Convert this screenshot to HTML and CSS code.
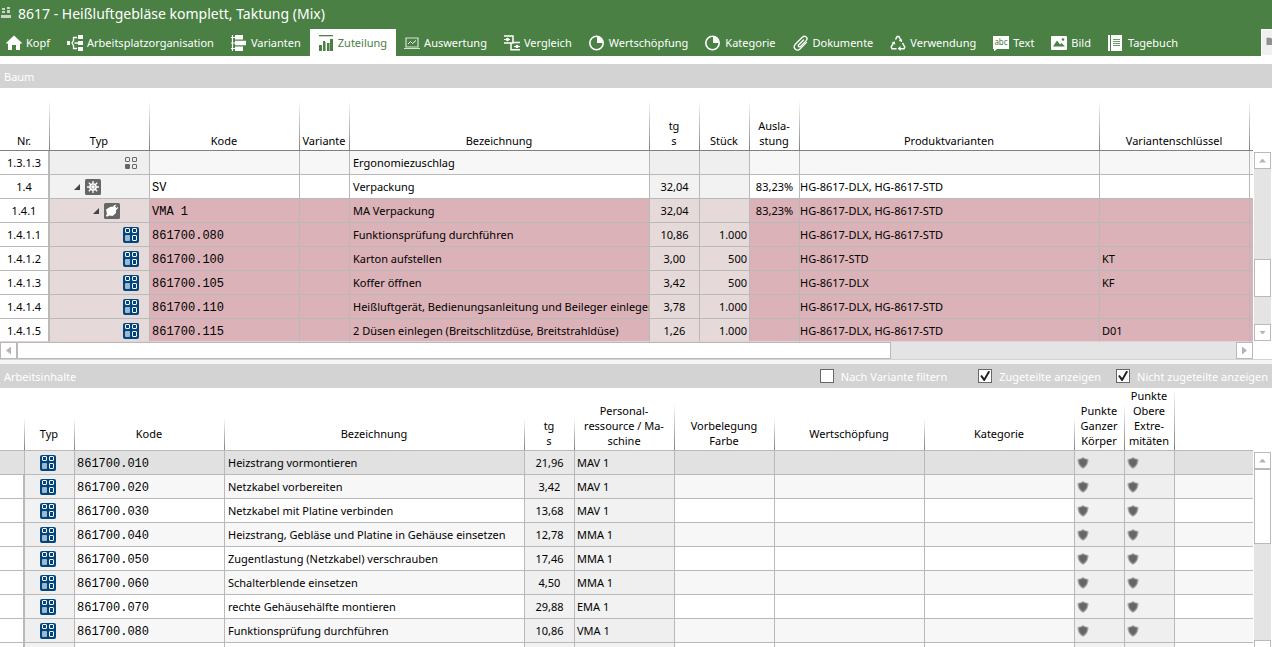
FILE: index.html
```html
<!DOCTYPE html>
<html lang="de">
<head>
<meta charset="utf-8">
<title>8617 - Heißluftgebläse komplett, Taktung (Mix)</title>
<link rel="stylesheet" href="styles.css">
</head>
<body>
<svg class="defs" aria-hidden="true">
  <symbol id="step" viewBox="0 0 16 16">
    <rect width="16" height="16" rx="2" fill="#00457c"/>
    <g fill="none" stroke="#fff"><rect x="2.5" y="1.5" width="4" height="4" rx=".5"/><rect x="9.5" y="1.5" width="4" height="4" rx=".5"/><rect x="9.5" y="8.5" width="4" height="5" rx=".5"/></g>
    <rect x="2" y="8" width="5" height="6" rx="1" fill="#9db9d0"/>
  </symbol>
  <symbol id="step-plain" viewBox="0 0 16 16">
    <g fill="none" stroke="#666"><rect x="2.5" y="2.5" width="4" height="4" rx=".5"/><rect x="9.5" y="2.5" width="4" height="4" rx=".5"/><rect x="9.5" y="9.5" width="4" height="4" rx=".5"/></g>
    <rect x="2" y="9" width="5" height="5" rx="1" fill="#666"/>
  </symbol>
  <symbol id="gear" viewBox="0 0 16 16">
    <rect width="16" height="16" rx="1.5" fill="#666"/>
    <path d="M8 2v12M2 8h12M3.8 3.8l8.4 8.4M12.2 3.8l-8.4 8.4" stroke="#fff" stroke-width="1.3"/>
    <circle cx="8" cy="8" r="3.8" fill="#fff"/><circle cx="8" cy="8" r="2" fill="none" stroke="#999" stroke-width=".8"/>
  </symbol>
  <symbol id="tool" viewBox="0 0 16 16">
    <rect width="16" height="16" rx="1.5" fill="#666"/>
    <path d="M2 6.500l4-2.500 2.500-.5L12 7v3l-3.500 3-3-.5-2.500 1.300-1-1 1-2z" fill="#fff"/>
    <path d="M9 4.500c0-2 2-3 3.500-2.500L11 3.500l1.500 1.500L14 3.800c.3 2-1.200 3.500-3 3.200z" fill="#fff"/>
  </symbol>
  <symbol id="shield" viewBox="0 0 12 12">
    <path d="M6 0l2.500 1.500 3 .5c.2 4-1.500 8-5.500 9.800C2 10 .3 6 .5 2l3-.5z" fill="#b0b0b0"/>
    <path d="M6 1.800l4 1.200c0 3-1.300 5.800-4 7.300C3.300 8.800 2 6 2 3z" fill="#666" stroke="#777"/>
  </symbol>
</svg>

<header class="app">
  <div class="title">
    <svg width="12" height="12" viewBox="0 0 12 12" fill="#c6d8c4"><path d="M2 1h3v2H2zM7 0h3v2H7zM2 4h3v2H2zM7 3h3v3H7zM1 8h10v3H1z"/></svg>
    <h1>8617 - Heißluftgebläse komplett, Taktung (Mix)</h1>
  </div>
  <nav class="tabs">
    <button class="tab"><svg viewBox="0 0 16 16"><path d="M8 .5l8 7.500-1 1-1-.8V15h-4v-5H6v5H2V8.200L1 9 0 8z" fill="#fff"/></svg>Kopf</button>
    <button class="tab"><svg viewBox="0 0 16 16"><path d="M0 6h3v4H0zM11 0h5v4h-5zM11 6h5v4h-5zM11 12h5v4h-5z" fill="#fff"/><path d="M10 2.500H6.500v3L5 8l1.500 2.500v3H10M7.500 8H11" fill="none" stroke="#fff" stroke-width="1.300"/></svg>Arbeitsplatzorganisation</button>
    <button class="tab"><svg viewBox="0 0 16 16"><path d="M1.500 0v16M0 2.500h4M0 8h4M0 13.500h4" stroke="#fff" stroke-width="1.200"/><path d="M4 0h8v4.500H4zM4 5.800h11v4.400H4zM4 11.500h8V16H4z" fill="#fff"/></svg>Varianten</button>
    <button class="tab active" aria-current="page"><svg viewBox="0 0 16 16"><path d="M1 0h14v1.300H1z" fill="#4a8044"/><path d="M1 10h3v6H1zM5 6h2v10H5zM9 8h2v8H9zM12 4h3v12h-3z" fill="#4a8044"/><path d="M7 7h1v9H7zM11 8h1v8h-1z" fill="#9dbb9a"/></svg>Zuteilung</button>
    <button class="tab"><svg viewBox="0 0 16 16"><path d="M2 3h12v9H2zM0 13.500h16" fill="none" stroke="#d5e2d3" stroke-width="1.200"/><path d="M4 9l2.500-2.500 2 2L12 5.500" fill="none" stroke="#fff"/></svg>Auswertung</button>
    <button class="tab"><svg viewBox="0 0 16 16"><path d="M0 1h9v7H0M7 8v6.800h9M8 7.500h8" fill="none" stroke="#fff" stroke-width="1.500"/><path d="M0 4.500h6M10 11.500h6" stroke="#fff"/><circle cx="3.500" cy="4.500" r="1.700" fill="#fff"/><circle cx="13" cy="11.500" r="1.700" fill="#fff"/></svg>Vergleich</button>
    <button class="tab"><svg viewBox="0 0 16 16"><circle cx="7.500" cy="8" r="6.700" fill="none" stroke="#fff" stroke-width="1.600"/><path d="M8 8V1.500A6.500 6.500 0 0 1 14 8z" fill="#fff"/></svg>Wertschöpfung</button>
    <button class="tab"><svg viewBox="0 0 16 16"><circle cx="7.500" cy="8" r="6.700" fill="none" stroke="#fff" stroke-width="1.600"/><path d="M8 8V1.500A6.500 6.500 0 0 1 14 8z" fill="#fff"/></svg>Kategorie</button>
    <button class="tab"><svg viewBox="0 0 16 16"><path d="M10.500 5L5.800 9.700c-1.300 1.300.4 3 1.700 1.700L13 5.900c2.700-2.900-.9-6.300-3.700-3.600L2.500 9c-3.500 3.600 1.100 8.200 4.700 4.700l6.300-6.300" fill="none" stroke="#fff" stroke-width="1.300" stroke-linecap="round"/></svg>Dokumente</button>
    <button class="tab"><svg viewBox="0 0 16 16"><path d="M5.500 4.500L7.200 1.500h1.600L11 5.500M12.500 8l2.300 4-.8 1.700h-4M6.500 13.700H2L1.200 12l2.500-4.500" fill="none" stroke="#fff" stroke-width="1.500"/><path d="M12.300 7.200l-3.500-1.500 3-1.800zM10.500 11v5l-2.800-2.400zM1.500 7.800l3.300-1.600.5 3.500z" fill="#fff"/></svg>Verwendung</button>
    <button class="tab"><svg viewBox="0 0 16 16"><path d="M0 1h16v13H4l-3 2.500V14H0z" fill="#fff"/><text x="8" y="10" class="abc">abc</text></svg>Text</button>
    <button class="tab"><svg viewBox="0 0 16 16"><rect y="1" width="16" height="14" rx="1" fill="#fff"/><path d="M2 11.500l4-6 3 4 1.500-1.500 3.500 3.500z" fill="#4a8044"/><circle cx="12" cy="4.500" r="1.300" fill="#4a8044"/></svg>Bild</button>
    <button class="tab"><svg viewBox="0 0 16 16"><path d="M0 0h14v16H0z" fill="#fff"/><path d="M2.500 0v16" stroke="#4a8044"/><path d="M5 4.500h7M5 6.500h7M5 8.500h7M5 10.500h7" stroke="#6f9a6a"/></svg>Tagebuch</button>
    <button class="more" aria-label="Weitere"><svg viewBox="0 0 16 16"><path d="M0 2h5l1 1h10v8H0z" fill="#909090"/></svg></button>
  </nav>
</header>

<main>
  <section class="panel tree">
    <div class="bar"><h2>Baum</h2></div>
    <div class="pane">
      <div class="grid">
        <table>
          <colgroup><col class="w50"><col class="w100"><col class="w150"><col class="w50"><col class="w300"><col class="w50"><col class="w50"><col class="w50"><col class="w300"><col class="w150"><col></colgroup>
          <thead><tr><th><span>Nr.</span></th><th><span>Typ</span></th><th><span>Kode</span></th><th><span>Variante</span></th><th><span>Bezeichnung</span></th><th><span>tg<br>s</span></th><th><span>Stück</span></th><th><span>Ausla-<br>stung</span></th><th><span>Produktvarianten</span></th><th><span>Variantenschlüssel</span></th><th></th></tr></thead>
          <tbody>
            <tr class="alt"><td class="nr">1.3.1.3</td><td class="ro l3"><svg class="i"><use href="#step-plain"/></svg></td><td></td><td></td><td class="name">Ergonomiezuschlag</td><td class="ro"></td><td class="ro"></td><td></td><td></td><td></td><td></td></tr>
            <tr><td class="nr">1.4</td><td class="ro l1"><i class="open"></i><svg class="i"><use href="#gear"/></svg></td><td class="code">SV</td><td></td><td class="name">Verpackung</td><td class="ro mid">32,04</td><td class="ro"></td><td class="mid">83,23%</td><td class="pv">HG-8617-DLX, HG-8617-STD</td><td></td><td></td></tr>
            <tr class="hit"><td class="nr">1.4.1</td><td class="ro l2"><i class="open"></i><svg class="i"><use href="#tool"/></svg></td><td class="code">VMA 1</td><td></td><td class="name">MA Verpackung</td><td class="ro mid">32,04</td><td class="ro"></td><td class="mid">83,23%</td><td class="pv">HG-8617-DLX, HG-8617-STD</td><td></td><td></td></tr>
            <tr class="hit"><td class="nr">1.4.1.1</td><td class="ro l3"><svg class="i"><use href="#step"/></svg></td><td class="code">861700.080</td><td></td><td class="name">Funktionsprüfung durchführen</td><td class="ro mid">10,86</td><td class="ro num">1.000</td><td></td><td class="pv">HG-8617-DLX, HG-8617-STD</td><td></td><td></td></tr>
            <tr class="hit"><td class="nr">1.4.1.2</td><td class="ro l3"><svg class="i"><use href="#step"/></svg></td><td class="code">861700.100</td><td></td><td class="name">Karton aufstellen</td><td class="ro mid">3,00</td><td class="ro num">500</td><td></td><td class="pv">HG-8617-STD</td><td>KT</td><td></td></tr>
            <tr class="hit"><td class="nr">1.4.1.3</td><td class="ro l3"><svg class="i"><use href="#step"/></svg></td><td class="code">861700.105</td><td></td><td class="name">Koffer öffnen</td><td class="ro mid">3,42</td><td class="ro num">500</td><td></td><td class="pv">HG-8617-DLX</td><td>KF</td><td></td></tr>
            <tr class="hit"><td class="nr">1.4.1.4</td><td class="ro l3"><svg class="i"><use href="#step"/></svg></td><td class="code">861700.110</td><td></td><td class="name">Heißluftgerät, Bedienungsanleitung und Beileger einlegen</td><td class="ro mid">3,78</td><td class="ro num">1.000</td><td></td><td class="pv">HG-8617-DLX, HG-8617-STD</td><td></td><td></td></tr>
            <tr class="hit last"><td class="nr">1.4.1.5</td><td class="ro l3"><svg class="i"><use href="#step"/></svg></td><td class="code">861700.115</td><td></td><td class="name">2 Düsen einlegen (Breitschlitzdüse, Breitstrahldüse)</td><td class="ro mid">1,26</td><td class="ro num">1.000</td><td></td><td class="pv">HG-8617-DLX, HG-8617-STD</td><td>D01</td><td></td></tr>
          </tbody>
        </table>
      </div>
      <div class="vscroll"><button class="arrow" aria-label="Nach oben"><i class="up"></i></button><div class="gap-before"></div><div class="thumb"></div><div class="gap-after"></div><button class="arrow" aria-label="Nach unten"><i class="down"></i></button></div>
      <div class="hscroll"><button class="arrow" aria-label="Nach links"><i class="left"></i></button><div class="thumb"></div><div class="rest"></div><button class="arrow" aria-label="Nach rechts"><i class="right"></i></button></div>
    </div>
  </section>

  <section class="panel work">
    <div class="bar"><h2>Arbeitsinhalte</h2>
      <div class="filters">
        <label class="first"><input type="checkbox">Nach Variante filtern</label>
        <label><input type="checkbox" checked>Zugeteilte anzeigen</label>
        <label><input type="checkbox" checked>Nicht zugeteilte anzeigen</label>
      </div>
    </div>
    <div class="pane">
      <div class="grid">
        <table>
          <colgroup><col class="w25"><col class="w50"><col class="w150"><col class="w300"><col class="w50"><col class="w100"><col class="w100"><col class="w150"><col class="w150"><col class="w50"><col class="w50"><col></colgroup>
          <thead><tr><th><span></span></th><th><span>Typ</span></th><th><span>Kode</span></th><th><span>Bezeichnung</span></th><th><span>tg<br>s</span></th><th><span>Personal-<br>ressource / Ma-<br>schine</span></th><th><span>Vorbelegung<br>Farbe</span></th><th><span>Wertschöpfung</span></th><th><span>Kategorie</span></th><th><span>Punkte<br>Ganzer<br>Körper</span></th><th><span>Punkte<br>Obere<br>Extre-<br>mitäten</span></th><th></th></tr></thead>
          <tbody>
            <tr class="sel"><td class="nr"></td><td class="ro typ"><svg class="i"><use href="#step"/></svg></td><td class="code">861700.010</td><td class="name">Heizstrang vormontieren</td><td class="ro mid">21,96</td><td class="ro">MAV 1</td><td></td><td></td><td></td><td class="ro"><svg class="s"><use href="#shield"/></svg></td><td class="ro"><svg class="s"><use href="#shield"/></svg></td><td></td></tr>
            <tr class="alt"><td class="nr"></td><td class="ro typ"><svg class="i"><use href="#step"/></svg></td><td class="code">861700.020</td><td class="name">Netzkabel vorbereiten</td><td class="ro mid">3,42</td><td class="ro">MAV 1</td><td></td><td></td><td></td><td class="ro"><svg class="s"><use href="#shield"/></svg></td><td class="ro"><svg class="s"><use href="#shield"/></svg></td><td></td></tr>
            <tr><td class="nr"></td><td class="ro typ"><svg class="i"><use href="#step"/></svg></td><td class="code">861700.030</td><td class="name">Netzkabel mit Platine verbinden</td><td class="ro mid">13,68</td><td class="ro">MAV 1</td><td></td><td></td><td></td><td class="ro"><svg class="s"><use href="#shield"/></svg></td><td class="ro"><svg class="s"><use href="#shield"/></svg></td><td></td></tr>
            <tr class="alt"><td class="nr"></td><td class="ro typ"><svg class="i"><use href="#step"/></svg></td><td class="code">861700.040</td><td class="name">Heizstrang, Gebläse und Platine in Gehäuse einsetzen</td><td class="ro mid">12,78</td><td class="ro">MMA 1</td><td></td><td></td><td></td><td class="ro"><svg class="s"><use href="#shield"/></svg></td><td class="ro"><svg class="s"><use href="#shield"/></svg></td><td></td></tr>
            <tr><td class="nr"></td><td class="ro typ"><svg class="i"><use href="#step"/></svg></td><td class="code">861700.050</td><td class="name">Zugentlastung (Netzkabel) verschrauben</td><td class="ro mid">17,46</td><td class="ro">MMA 1</td><td></td><td></td><td></td><td class="ro"><svg class="s"><use href="#shield"/></svg></td><td class="ro"><svg class="s"><use href="#shield"/></svg></td><td></td></tr>
            <tr class="alt"><td class="nr"></td><td class="ro typ"><svg class="i"><use href="#step"/></svg></td><td class="code">861700.060</td><td class="name">Schalterblende einsetzen</td><td class="ro mid">4,50</td><td class="ro">MMA 1</td><td></td><td></td><td></td><td class="ro"><svg class="s"><use href="#shield"/></svg></td><td class="ro"><svg class="s"><use href="#shield"/></svg></td><td></td></tr>
            <tr><td class="nr"></td><td class="ro typ"><svg class="i"><use href="#step"/></svg></td><td class="code">861700.070</td><td class="name">rechte Gehäusehälfte montieren</td><td class="ro mid">29,88</td><td class="ro">EMA 1</td><td></td><td></td><td></td><td class="ro"><svg class="s"><use href="#shield"/></svg></td><td class="ro"><svg class="s"><use href="#shield"/></svg></td><td></td></tr>
            <tr class="alt"><td class="nr"></td><td class="ro typ"><svg class="i"><use href="#step"/></svg></td><td class="code">861700.080</td><td class="name">Funktionsprüfung durchführen</td><td class="ro mid">10,86</td><td class="ro">VMA 1</td><td></td><td></td><td></td><td class="ro"><svg class="s"><use href="#shield"/></svg></td><td class="ro"><svg class="s"><use href="#shield"/></svg></td><td></td></tr>
            <tr><td class="nr"></td><td class="ro"></td><td></td><td></td><td class="ro"></td><td class="ro"></td><td></td><td></td><td></td><td class="ro"></td><td class="ro"></td><td></td></tr>
          </tbody>
        </table>
      </div>
      <div class="vscroll"><button class="arrow" aria-label="Nach oben"><i class="up"></i></button><div class="thumb"></div><div class="gap-after"></div><button class="arrow" aria-label="Nach unten"><i class="down"></i></button></div>
    </div>
  </section>
</main>
</body>
</html>
```
FILE: styles.css
```css
* { box-sizing: border-box; }

html, body { height: 100%; }

body {
  margin: 0;
  overflow: hidden;
  background: #fff;
  color: #000;
  font: 11px/15px "Noto Sans", "Open Sans", sans-serif;
}

h1, h2 { margin: 0; font-size: inherit; font-weight: normal; }

button { border: 0; padding: 0; font: inherit; color: inherit; background: none; }

.defs { display: none; }

/* Application header */
.app { background: #4a8044; color: #fff; margin-bottom: 8px; }

.title {
  display: flex;
  align-items: center;
  gap: 6px;
  height: 29px;
  padding-bottom: 2px;
  font-size: 14px;
}

.title svg { margin-bottom: 2px; }

.tabs { display: flex; height: 27px; overflow: hidden; }

.tab {
  display: flex;
  align-items: center;
  gap: 4px;
  padding: 0 9px 0 8px;
  white-space: nowrap;
}

.tab:first-child { padding-left: 6px; }
.tab svg { width: 16px; height: 16px; flex: none; }
.tab.active { background: #fff; color: #4a8044; }

.abc {
  font: 8px "Noto Sans", sans-serif;
  fill: #4a8044;
  text-anchor: middle;
}

.more {
  margin-left: auto;
  width: 11px;
  padding-left: 3px;
  border: 1px solid #fff;
  border-right: 0;
  background: #f0f0f0;
  overflow: hidden;
}

.more svg { display: block; width: 16px; height: 13px; }

/* Panels */
.bar {
  display: flex;
  align-items: center;
  justify-content: space-between;
  height: 24px;
  padding: 0 4px;
  background: #d3d3d3;
  color: #fff;
}

.filters, .filters label { display: flex; align-items: center; }
.filters { gap: 15px; }
.filters label { gap: 7px; }
.filters .first { margin-right: 16px; }

.filters input {
  appearance: none;
  display: grid;
  place-items: center;
  width: 14px;
  height: 14px;
  margin: 0;
  border: 1px solid #666;
  background: #fff;
}

.filters input:checked::before {
  content: "";
  width: 10px;
  height: 10px;
  background: #222;
  clip-path: polygon(0 50%, 15% 40%, 40% 70%, 80% 0, 100% 5%, 45% 100%, 35% 100%);
}

.pane {
  display: grid;
  grid-template-columns: minmax(0, 1fr) 17px;
  column-gap: 1px;
  padding-right: 1px;
}

.tree { border-bottom: 4px solid #f5f5f5; }
.tree .pane { border-bottom: 1px solid #d3d3d3; }

table { width: 100%; table-layout: fixed; border-spacing: 0; }

.w25 { width: 25px; }
.w50 { width: 50px; }
.w100 { width: 100px; }
.w150 { width: 150px; }
.w300 { width: 300px; }

th {
  height: 63px;
  padding: 0;
  border-bottom: 1px solid #808080;
  font-weight: normal;
  vertical-align: bottom;
  white-space: nowrap;
}

th span {
  display: grid;
  align-content: end;
  padding: 0 2px 2px 0;
  background: linear-gradient(#80808000, #808080) right / 1px 100% no-repeat;
}

.tree th span { height: 50px; }
.work th { border-bottom-color: #b9b9b9; }
.work th span { align-content: center; min-height: 32px; }

td {
  height: 24px;
  padding: 0 2px;
  border-right: 1px solid #b9b9b9;
  border-bottom: 1px solid #b9b9b9;
  overflow: hidden;
  white-space: nowrap;
}

td:last-child { border-right: 0; }

.ro { background: #f2f2f2; }
.alt td { background: #f7f7f7; }
.alt .ro { background: #efefef; }
.sel td { background: #e1e1e1; }
.sel .ro { background: #e8e8e8; }
.hit td { background: #dab2b7; }
.hit .ro { background: #e6d9d9; }
.last td { height: 23px; border-bottom: 1px solid #e6d2d4; }

tr .nr {
  padding: 0;
  border-right-width: 2px;
  background: #fff;
  text-align: center;
}

.sel .nr { border-right-width: 1px; background: #e1e1e1; }

.code { padding-top: 4px; font: 12px/15px "Liberation Mono", monospace; }
.name { padding-left: 3px; }
.pv { padding-left: 0; }
.mid { text-align: center; }
.num { text-align: right; }
.typ { text-align: center; padding-right: 6px; }
.l1 { padding-left: 24px; }
.l2 { padding-left: 43px; }
.l3 { padding-left: 73px; }

.i { width: 16px; height: 16px; vertical-align: middle; }
.s { display: block; width: 12px; height: 12px; }

.open {
  display: inline-block;
  width: 6px;
  height: 6px;
  margin-right: 5px;
  vertical-align: middle;
  background: #444;
  clip-path: polygon(100% 0, 100% 100%, 0 100%);
}

/* Scroll bars */
.vscroll {
  display: flex;
  flex-direction: column;
  margin-top: 64px;
  background: #e4e4e4;
}

.hscroll { display: flex; background: #e4e4e4; }

.arrow {
  display: grid;
  place-items: center;
  flex: none;
  width: 17px;
  height: 17px;
  border: 1px solid #b9b9b9;
  background: #fff;
}

.arrow i { width: 7px; height: 4px; background: #b4b4b4; }
.arrow .left, .arrow .right { width: 5px; height: 8px; }
.up { clip-path: polygon(50% 0, 100% 100%, 0 100%); }
.down { clip-path: polygon(0 0, 100% 0, 50% 100%); }
.left { clip-path: polygon(100% 0, 100% 100%, 0 50%); }
.right { clip-path: polygon(0 0, 100% 50%, 0 100%); }

.thumb { border: 1px solid #b9b9b9; background: #fff; }

.tree .vscroll { margin-bottom: 1px; }
.tree .gap-before { flex: 91; }
.tree .vscroll .thumb { flex: 37; }
.tree .gap-after { flex: 27; }
.hscroll .thumb { flex: 873; }
.hscroll .rest { flex: 346; }
.work .thumb { flex: 74; }
.work .gap-after { flex: 97; }
.work .vscroll { margin-bottom: 10px; }
```
